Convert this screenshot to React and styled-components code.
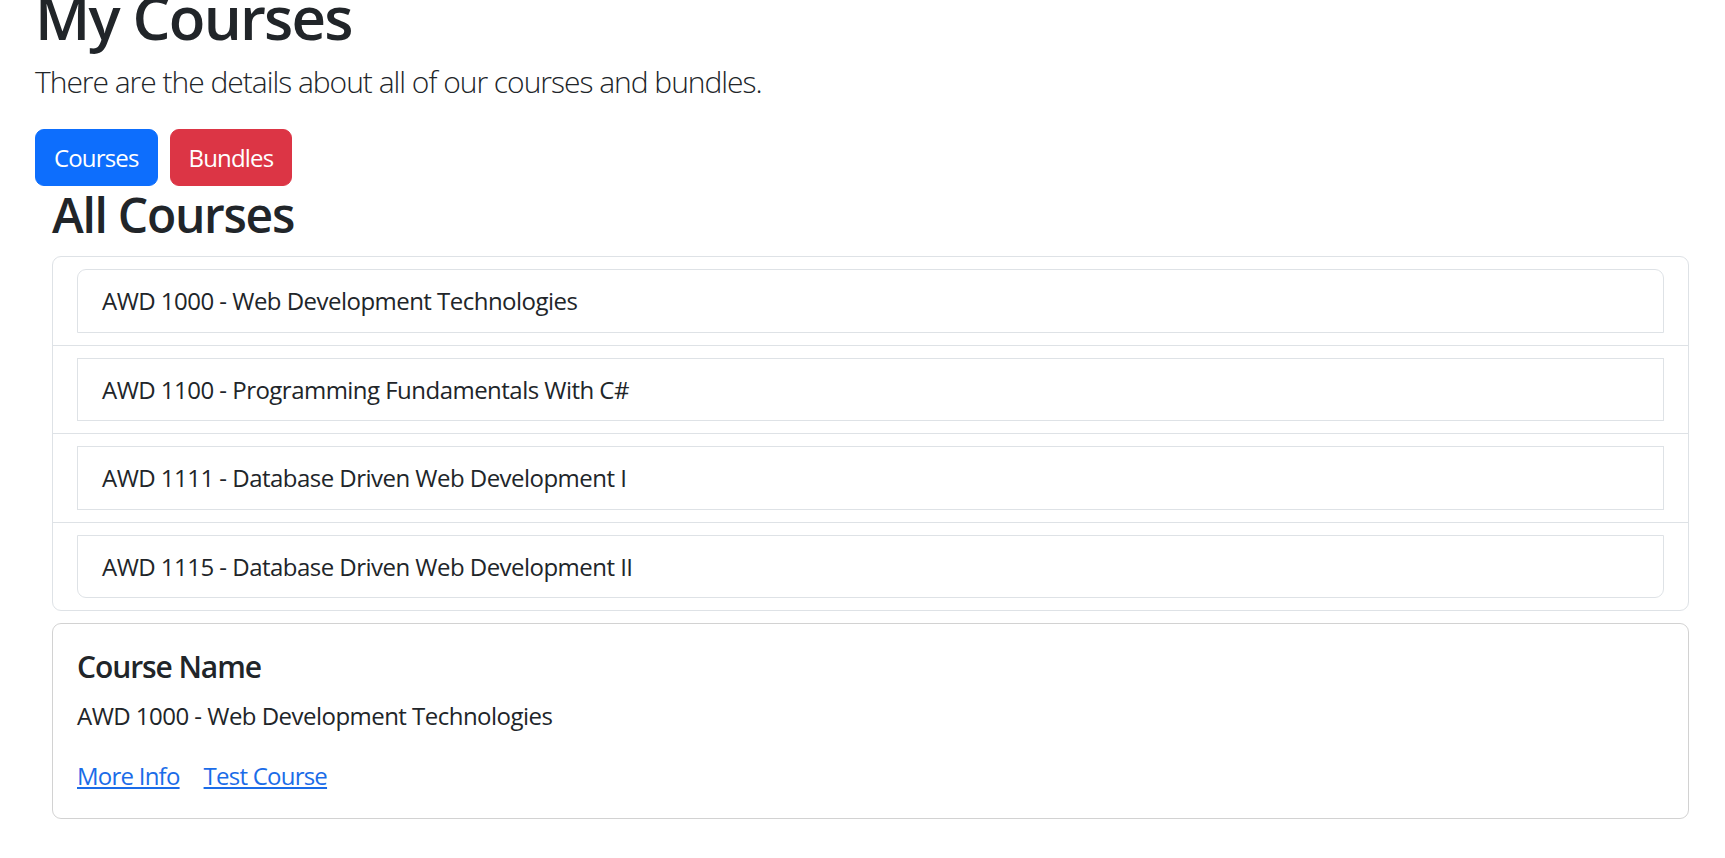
import React from "react";
import styled, { createGlobalStyle } from "styled-components";

const Global = createGlobalStyle`
  html, body { margin: 0; padding: 0; background: #fff; }
  body {
    font-family: "Open Sans", "Noto Sans", sans-serif;
    color: #212529;
    font-size: 24px;
    letter-spacing: -0.022em;
    overflow: hidden;
  }
  * { box-sizing: border-box; }
`;

const Page = styled.div`
  padding: 0 36px 0 35px;
  margin-top: -19px;
`;

const Title = styled.h1`
  font-size: 60px;
  font-weight: 600;
  line-height: 72px;
  letter-spacing: -0.03em;
  margin: 0 0 6px;
`;

const Lead = styled.p`
  font-size: 30px;
  font-weight: 300;
  line-height: 45px;
  letter-spacing: -0.034em;
  margin: 0 0 25px;
`;

const Toolbar = styled.div`
  display: flex;
  gap: 12px;
`;

const Button = styled.button`
  height: 57px;
  padding: 0 18px;
  border: 1px solid ${(p) => p.$bg};
  background: ${(p) => p.$bg};
  color: #fff;
  font-family: inherit;
  font-size: 24px;
  letter-spacing: -0.035em;
  line-height: 36px;
  border-radius: 9px;
  cursor: pointer;
`;

const Section = styled.section`
  margin-left: 17px;
`;

const SectionTitle = styled.h2`
  font-size: 48px;
  font-weight: 600;
  line-height: 58px;
  letter-spacing: -0.027em;
  margin: 0 0 12px;
`;

const List = styled.div`
  border: 1px solid #dee2e6;
  border-radius: 9px;
  overflow: hidden;
`;

const ListRow = styled.div`
  padding: 12px 24px;
  & + & { border-top: 1px solid #dee2e6; }
`;

const CourseItem = styled.div`
  border: 1px solid #dee2e6;
  padding: 12px 24px;
  font-size: 24px;
  line-height: 37.5px;
  border-radius: ${(p) =>
    p.$pos === "first" ? "9px 9px 0 0" : p.$pos === "last" ? "0 0 9px 9px" : "0"};
`;

const Card = styled.div`
  margin-top: 12px;
  border: 1px solid rgba(0, 0, 0, 0.175);
  border-radius: 9px;
  padding: 25px 24px 24px;
`;

const CardTitle = styled.h5`
  font-size: 30px;
  font-weight: 600;
  line-height: 36px;
  letter-spacing: -0.036em;
  margin: 0 0 13px;
`;

const CardText = styled.p`
  font-size: 24px;
  line-height: 36px;
  margin: 0 0 24px;
`;

const Links = styled.div`
  display: flex;
  gap: 24px;
  line-height: 36px;
`;

const CardLink = styled.a`
  color: #1b6ce8;
  text-decoration: underline;
  font-size: 24px;
  letter-spacing: -0.032em;
`;

const courses = [
  "AWD 1000 - Web Development Technologies",
  "AWD 1100 - Programming Fundamentals With C#",
  "AWD 1111 - Database Driven Web Development I",
  "AWD 1115 - Database Driven Web Development II",
];

export default function App() {
  return (
    <>
      <Global />
      <Page>
        <Title>My Courses</Title>
        <Lead>There are the details about all of our courses and bundles.</Lead>
        <Toolbar>
          <Button $bg="#0d6efd">Courses</Button>
          <Button $bg="#dc3545">Bundles</Button>
        </Toolbar>
        <Section>
          <SectionTitle>All Courses</SectionTitle>
          <List>
            {courses.map((c, i) => (
              <ListRow key={c}>
                <CourseItem $pos={i === 0 ? "first" : i === courses.length - 1 ? "last" : "mid"}>
                  {c}
                </CourseItem>
              </ListRow>
            ))}
          </List>
          <Card>
            <CardTitle>Course Name</CardTitle>
            <CardText>AWD 1000 - Web Development Technologies</CardText>
            <Links>
              <CardLink href="#">More Info</CardLink>
              <CardLink href="#">Test Course</CardLink>
            </Links>
          </Card>
        </Section>
      </Page>
    </>
  );
}
